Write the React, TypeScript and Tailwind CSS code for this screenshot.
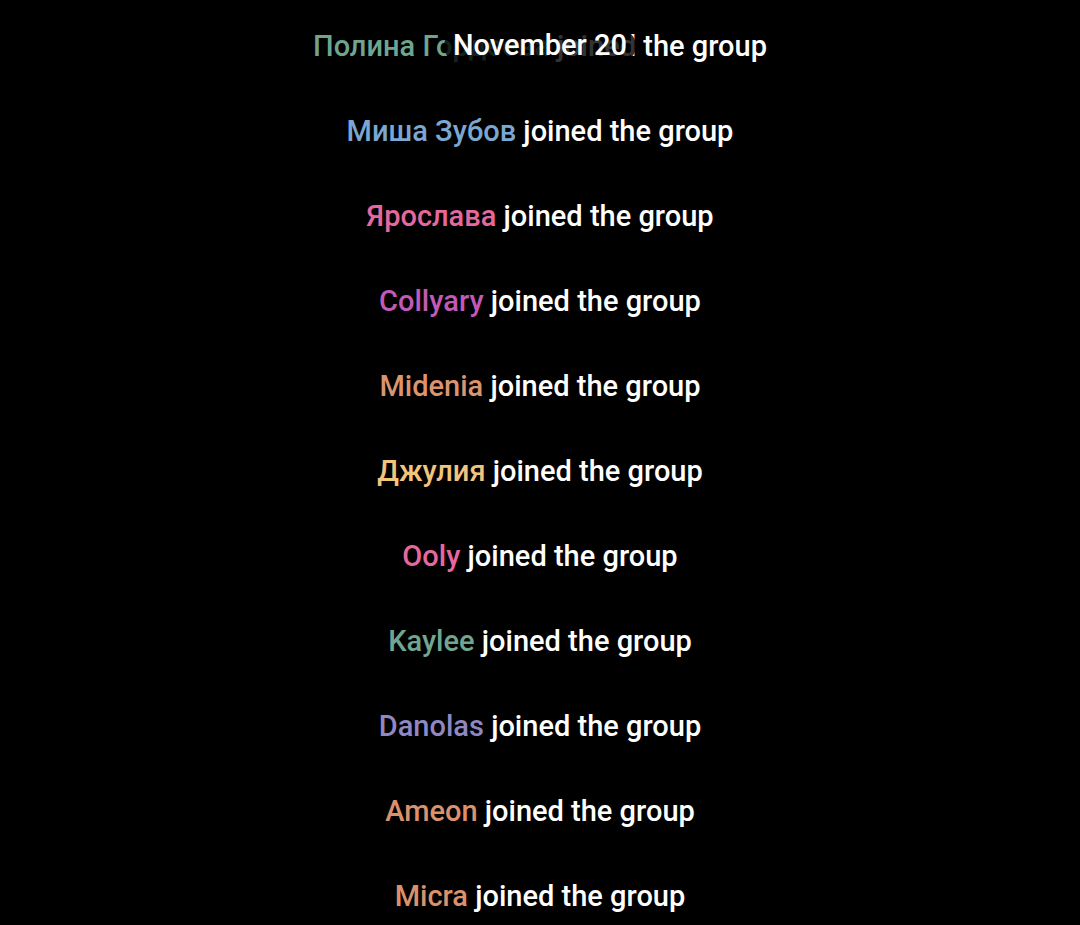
import React from "react";

type Row = { name: string; color: string };

const rows: Row[] = [
  { name: "Полина Гордеева", color: "text-[#6fa58f]" },
  { name: "Миша Зубов", color: "text-[#7ba7d1]" },
  { name: "Ярослава", color: "text-[#e3699e]" },
  { name: "Collyary", color: "text-[#c05ab6]" },
  { name: "Midenia", color: "text-[#da946f]" },
  { name: "Джулия", color: "text-[#f2c47c]" },
  { name: "Ooly", color: "text-[#e5699f]" },
  { name: "Kaylee", color: "text-[#70a58f]" },
  { name: "Danolas", color: "text-[#8f88c3]" },
  { name: "Ameon", color: "text-[#da916c]" },
  { name: "Micra", color: "text-[#da916c]" },
];

const App: React.FC = () => {
  return (
    <div
      className="relative w-[1080px] h-[925px] overflow-hidden bg-black pt-[4px]"
      style={{ fontFamily: "Roboto, 'Noto Sans', sans-serif" }}
    >
      <div className="flex flex-col items-center">
        {rows.map((r) => (
          <div key={r.name} className="h-[85px] flex items-center justify-center text-[29px] font-medium text-white">
            <span className={r.color}>{r.name}</span>
            <span>&nbsp;joined the group</span>
          </div>
        ))}
      </div>

      {/* sticky date */}
      <div className="absolute top-[29px] left-0 right-0 flex justify-center">
        <div className="px-[9px] h-[34px] flex items-center rounded-full bg-black/80 text-white text-[29px] font-medium">
          November 20
        </div>
      </div>
    </div>
  );
};

export default App;
